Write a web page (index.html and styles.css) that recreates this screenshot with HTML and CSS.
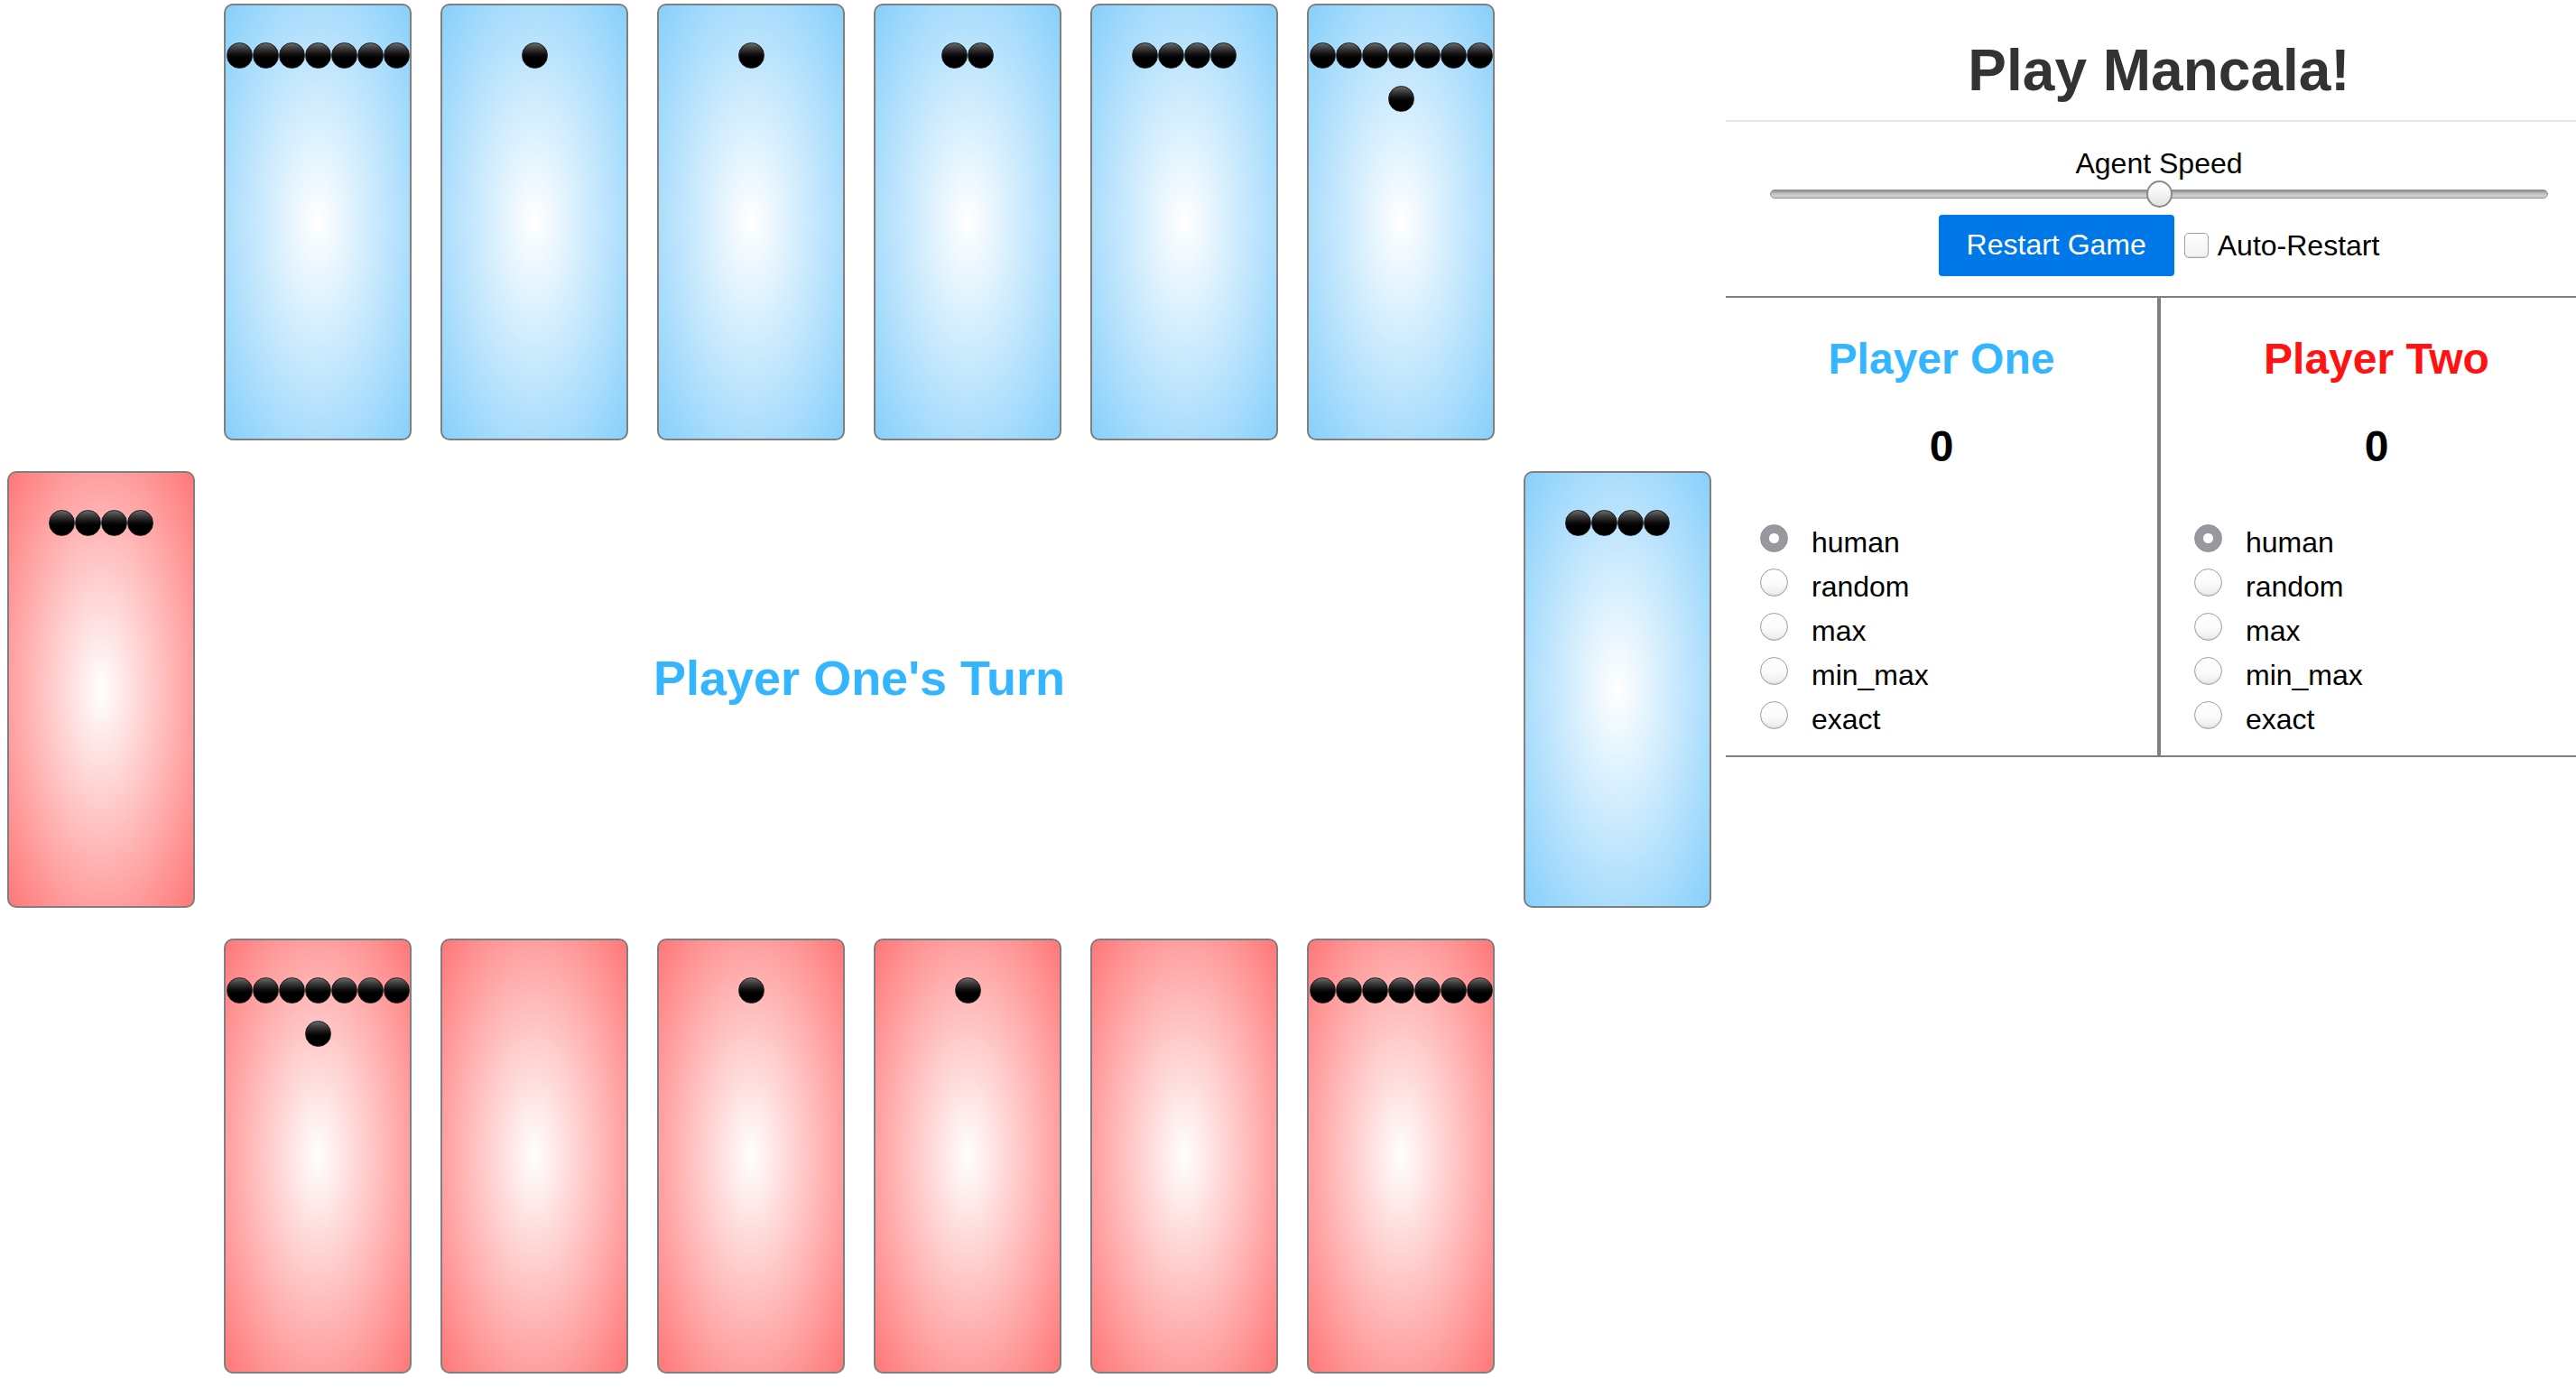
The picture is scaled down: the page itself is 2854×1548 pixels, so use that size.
FILE: index.html
```html
<!DOCTYPE html>
<html lang="en">
<head>
<meta charset="utf-8">
<title>Play Mancala!</title>
<link rel="stylesheet" href="styles.css">
</head>
<body>
<div class="page">
  <div class="board">
    <div class="spacer"></div>
    <div class="pit blue"><i class="stone"></i><i class="stone"></i><i class="stone"></i><i class="stone"></i><i class="stone"></i><i class="stone"></i><i class="stone"></i></div>
    <div class="pit blue"><i class="stone"></i></div>
    <div class="pit blue"><i class="stone"></i></div>
    <div class="pit blue"><i class="stone"></i><i class="stone"></i></div>
    <div class="pit blue"><i class="stone"></i><i class="stone"></i><i class="stone"></i><i class="stone"></i></div>
    <div class="pit blue"><i class="stone"></i><i class="stone"></i><i class="stone"></i><i class="stone"></i><i class="stone"></i><i class="stone"></i><i class="stone"></i><i class="stone"></i></div>
    <div class="spacer"></div>

    <div class="pit red"><i class="stone"></i><i class="stone"></i><i class="stone"></i><i class="stone"></i></div>
    <div class="turn">Player One's Turn</div>
    <div class="pit blue"><i class="stone"></i><i class="stone"></i><i class="stone"></i><i class="stone"></i></div>

    <div class="spacer"></div>
    <div class="pit red"><i class="stone"></i><i class="stone"></i><i class="stone"></i><i class="stone"></i><i class="stone"></i><i class="stone"></i><i class="stone"></i><i class="stone"></i></div>
    <div class="pit red"></div>
    <div class="pit red"><i class="stone"></i></div>
    <div class="pit red"><i class="stone"></i></div>
    <div class="pit red"></div>
    <div class="pit red"><i class="stone"></i><i class="stone"></i><i class="stone"></i><i class="stone"></i><i class="stone"></i><i class="stone"></i><i class="stone"></i></div>
    <div class="spacer"></div>
  </div>

  <div class="panel">
    <h1 class="title">Play Mancala!</h1>
    <div class="controls">
      <div class="speed-label">Agent Speed</div>
      <input class="slider" type="range" min="0" max="100" value="50">
      <div class="actions">
        <button class="btn" type="button">Restart Game</button>
        <label class="auto"><input class="check" type="checkbox"><span>Auto-Restart</span></label>
      </div>
    </div>
    <div class="players">
      <div class="player one">
        <div class="player-name name-one">Player One</div>
        <div class="score">0</div>
        <div class="options">
          <label class="opt"><input class="radio" type="radio" name="p1" checked>human</label>
          <label class="opt"><input class="radio" type="radio" name="p1">random</label>
          <label class="opt"><input class="radio" type="radio" name="p1">max</label>
          <label class="opt"><input class="radio" type="radio" name="p1">min_max</label>
          <label class="opt"><input class="radio" type="radio" name="p1">exact</label>
        </div>
      </div>
      <div class="player two">
        <div class="player-name name-two">Player Two</div>
        <div class="score">0</div>
        <div class="options">
          <label class="opt"><input class="radio" type="radio" name="p2" checked>human</label>
          <label class="opt"><input class="radio" type="radio" name="p2">random</label>
          <label class="opt"><input class="radio" type="radio" name="p2">max</label>
          <label class="opt"><input class="radio" type="radio" name="p2">min_max</label>
          <label class="opt"><input class="radio" type="radio" name="p2">exact</label>
        </div>
      </div>
    </div>
  </div>
</div>
</body>
</html>
```

FILE: styles.css
```css
html, body {
  margin: 0;
  overflow: hidden;
}
body {
  font-family: "Liberation Sans", Arial, Helvetica, sans-serif;
  font-size: 32px;
  color: #000;
  background: #fff;
}
.page {
  display: flex;
  align-items: flex-start;
  gap: 16px;
  padding: 4px 0 0 8px;
}

/* ---------- board ---------- */
.board {
  flex: none;
  display: grid;
  grid-template-columns: repeat(8, 208px);
  grid-template-rows: 484px 484px 482px;
  column-gap: 32px;
  row-gap: 34px;
}
.pit {
  box-sizing: border-box;
  border: 2px solid #808080;
  border-radius: 10px;
  padding-top: 41px;
  display: flex;
  flex-wrap: wrap;
  justify-content: center;
  align-content: flex-start;
  row-gap: 19px;
}
.blue {
  background: radial-gradient(ellipse at center, #ffffff 0%, #87cffb 100%);
}
.red {
  background: radial-gradient(ellipse at center, #ffffff 0%, #ff7777 100%);
}
.stone {
  display: block;
  width: 29px;
  height: 29px;
  box-sizing: border-box;
  border-radius: 50%;
  border: 1px solid #1c1c1c;
  background: linear-gradient(180deg, #6a6a6a 0%, #3a3a3a 22%, #111 45%, #000 60%, #000 100%);
}
.turn {
  grid-column: span 6;
  display: flex;
  align-items: center;
  justify-content: center;
  padding-bottom: 26px;
  font-size: 54px;
  font-weight: bold;
  color: #33b5ff;
}

/* ---------- panel ---------- */
.panel {
  flex: none;
  width: 960px;
}
.title {
  margin: 0;
  padding: 37px 0 18px;
  font-size: 64px;
  line-height: 74px;
  font-weight: bold;
  color: #333;
  text-align: center;
  border-bottom: 2px solid #e6e6e6;
}
.controls {
  padding: 28px 0 22px;
  text-align: center;
  border-bottom: 2px solid #808080;
}
.speed-label {
  line-height: 37px;
}
.slider {
  display: block;
  width: 862px;
  height: 30px;
  margin: 0 auto 8px;
  padding: 0;
  -webkit-appearance: none;
  appearance: none;
  background: transparent;
}
.slider::-webkit-slider-runnable-track {
  height: 10px;
  box-sizing: border-box;
  border-radius: 5px;
  border: 1px solid #949494;
  background: linear-gradient(180deg, #868686 0%, #b8b8b8 35%, #cecece 70%, #cbcbcb 100%);
}
.slider::-webkit-slider-thumb {
  -webkit-appearance: none;
  appearance: none;
  width: 29px;
  height: 30px;
  box-sizing: border-box;
  margin-top: -11px;
  border-radius: 50%;
  border: 2px solid #8a8a8a;
  background: linear-gradient(180deg, #ffffff 0%, #f4f4f4 50%, #e2e2e2 100%);
}
.actions {
  display: flex;
  justify-content: center;
  align-items: center;
  gap: 11px;
}
.btn {
  font: inherit;
  line-height: 36px;
  padding: 15px 31px 17px;
  border: none;
  border-radius: 4px;
  background: #0078e7;
  color: #fff;
}
.auto {
  display: flex;
  align-items: center;
  gap: 10px;
}
.check {
  -webkit-appearance: none;
  appearance: none;
  margin: 0;
  width: 27px;
  height: 28px;
  box-sizing: border-box;
  border: 1px solid #a2a2a2;
  border-radius: 5px;
  background: linear-gradient(180deg, #fff 0%, #f1f1f1 100%);
  box-shadow: inset 0 -1px 1px rgba(0, 0, 0, 0.1);
}

.players {
  display: flex;
  border-bottom: 2px solid #808080;
}
.player {
  width: 480px;
  box-sizing: border-box;
}
.player.one {
  border-right: 2px solid #808080;
}
.player.two {
  border-left: 2px solid #808080;
}
.player-name {
  margin-top: 40px;
  font-size: 48px;
  line-height: 55px;
  font-weight: bold;
  text-align: center;
}
.name-one { color: #33b5ff; }
.name-two { color: #ff1212; }
.score {
  margin-top: 42px;
  font-size: 48px;
  line-height: 55px;
  font-weight: bold;
  text-align: center;
}
.options {
  margin-top: 55px;
  padding: 0 0 15px 38px;
}
.player.two .options {
  padding-left: 37px;
}
.opt {
  display: block;
  line-height: 49px;
  height: 49px;
}
.radio {
  -webkit-appearance: none;
  appearance: none;
  width: 31px;
  height: 31px;
  margin: 0 26px 0 0;
  box-sizing: border-box;
  border-radius: 50%;
  border: 1px solid #9e9e9e;
  background: linear-gradient(180deg, #ffffff 0%, #fbfbfb 55%, #ebebeb 100%);
  box-shadow: inset 0 -1px 2px rgba(0, 0, 0, 0.1);
  vertical-align: baseline;
}
.radio:checked {
  border-color: #8f8f94;
  box-shadow: none;
  background: radial-gradient(circle at center, #ffffff 0 5px, #98989e 6px);
}
```
